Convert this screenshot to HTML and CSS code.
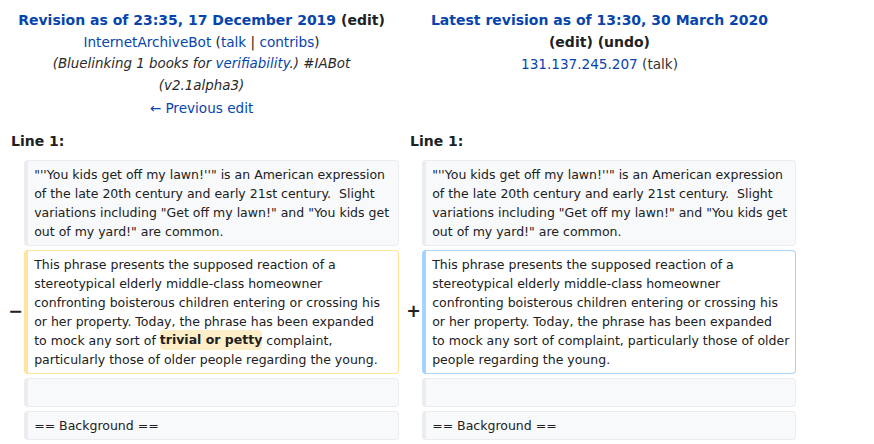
FILE: index.html
```html
<!DOCTYPE html>
<html>
<head>
<meta charset="utf-8">
<link rel="stylesheet" href="styles.css">
</head>
<body>
<div class="diff">
  <div class="hdr">
    <div class="title"><a class="link">Revision as of 23:35, 17 December 2019</a> (edit)</div>
    <div><a class="link">InternetArchiveBot</a> (<a class="link">talk</a> | <a class="link">contribs</a>)</div>
    <div class="comment">(Bluelinking 1 books for <a class="link">verifiability</a>.) #IABot (v2.1alpha3)</div>
    <div><a class="link">← Previous edit</a></div>
  </div>
  <div class="hdr">
    <div class="title"><a class="link">Latest revision as of 13:30, 30 March 2020</a></div>
    <div class="title">(edit) (undo)</div>
    <div><a class="link">131.137.245.207</a> <span class="dim">(talk)</span></div>
  </div>

  <div class="lineno">Line 1:</div>
  <div class="lineno">Line 1:</div>

  <div class="marker"></div>
  <div class="cell context">"''You kids get off my lawn!''" is an American expression
of the late 20th century and early 21st century.  Slight
variations including "Get off my lawn!" and "You kids get
out of my yard!" are common.</div>
  <div class="marker"></div>
  <div class="cell context">"''You kids get off my lawn!''" is an American expression
of the late 20th century and early 21st century.  Slight
variations including "Get off my lawn!" and "You kids get
out of my yard!" are common.</div>

  <div class="marker"><span>−</span></div>
  <div class="cell deleted">This phrase presents the supposed reaction of a
stereotypical elderly middle-class homeowner
confronting boisterous children entering or crossing his
or her property. Today, the phrase has been expanded
to mock any sort of <span class="change">trivial or petty</span> complaint,
particularly those of older people regarding the young.</div>
  <div class="marker"><span>+</span></div>
  <div class="cell added">This phrase presents the supposed reaction of a
stereotypical elderly middle-class homeowner
confronting boisterous children entering or crossing his
or her property. Today, the phrase has been expanded
to mock any sort of complaint, particularly those of older
people regarding the young.</div>

  <div class="marker"></div>
  <div class="cell context"><br></div>
  <div class="marker"></div>
  <div class="cell context"><br></div>

  <div class="marker"></div>
  <div class="cell context">== Background ==</div>
  <div class="marker"></div>
  <div class="cell context">== Background ==</div>
</div>
</body>
</html>
```
FILE: styles.css
```css
html, body {
  margin: 0;
  padding: 0;
  background: #ffffff;
}
body {
  font-family: "DejaVu Sans", sans-serif;
  font-size: 14px;
  line-height: 1.6;
  color: #202122;
}
.diff {
  display: grid;
  grid-template-columns: 16px 375px 15px 374px;
  column-gap: 4px;
  row-gap: 4px;
  padding: 4px;
}
.hdr {
  grid-column: span 2;
  text-align: center;
  padding: 4.6px 7px 2px;
  font-size: 13.6px;
  line-height: 22px;
}
.title {
  font-weight: bold;
  font-size: 14px;
}
.link {
  color: #0645ad;
  text-decoration: none;
}
.comment {
  font-style: italic;
  font-size: 13.4px;
  color: #2a2a2a;
}
.dim {
  color: #333333;
}
.lineno {
  grid-column: span 2;
  font-weight: bold;
  padding: 5px 7px 3.5px;
  line-height: 22.4px;
}
.marker {
  display: flex;
  align-items: center;
  justify-content: flex-end;
  font-weight: bold;
  font-size: 17.5px;
  line-height: 1.2;
}
.marker span {
  margin-right: -3px;
}
.cell {
  font-size: 12.5px;
  line-height: 19px;
  white-space: pre;
  border-style: solid;
  border-width: 1px 1px 1px 4px;
  border-radius: 4px;
  padding: 4px 6.2px;
}
.context {
  background: #f8f9fa;
  border-color: #eaecf0;
  color: #202122;
}
.deleted {
  background: #ffffff;
  border-color: #ffe49c;
}
.added {
  background: #ffffff;
  border-color: #a3d3ff;
}
.change {
  font-weight: bold;
  background: #feeec8;
  border-radius: 4px;
  padding: 2.2px 0;
}
```
